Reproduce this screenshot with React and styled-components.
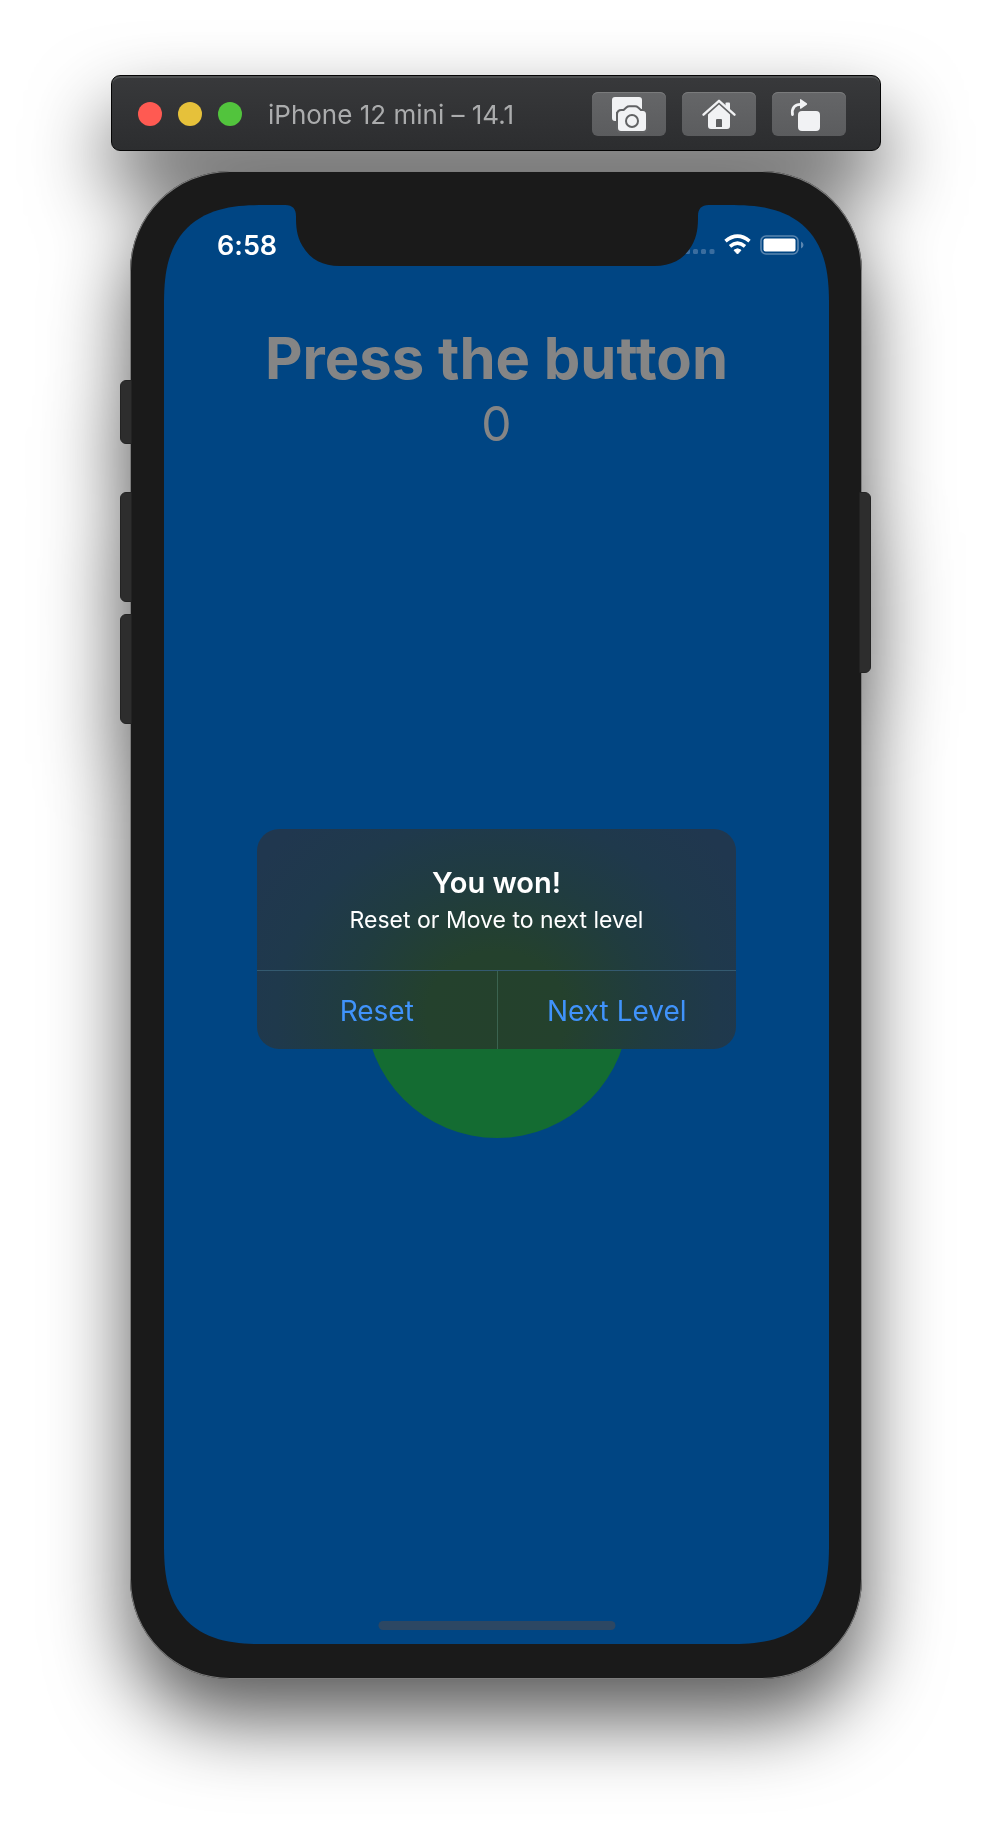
import React from "react";
import styled, { createGlobalStyle } from "styled-components";

const GlobalStyle = createGlobalStyle`
  *, *::before, *::after { box-sizing: border-box; }
  body {
    margin: 0;
    background: #fff;
    font-family: Inter, "Liberation Sans", sans-serif;
    font-variant-ligatures: none;
    font-feature-settings: "calt" 0;
  }
  h1, h2, p { margin: 0; }
  button { font: inherit; border: 0; padding: 0; cursor: pointer; }
`;

const Simulator = styled.main`
  display: flex;
  flex-direction: column;
  gap: 20px;
  padding: 75px 111px 148px;
  filter: drop-shadow(0 40px 40px rgba(0, 0, 0, 0.65));
`;

const Toolbar = styled.header`
  display: flex;
  align-items: center;
  height: 76px;
  padding: 2px 34px 0 26px;
  border: 1px solid #050505;
  border-radius: 9px;
  background: linear-gradient(#38393b, #2c2d2f);
  box-shadow: inset 0 2px 0 #505253;
`;

const TrafficLights = styled.div`
  display: flex;
  gap: 16px;
`;

const Light = styled.button`
  width: 24px;
  height: 24px;
  border-radius: 50%;
  background: ${(p) => p.$color};
`;

const DeviceTitle = styled.span`
  flex: 1;
  margin-left: 26px;
  padding-top: 2px;
  font-size: 26px;
  line-height: 32px;
  white-space: nowrap;
  color: #abacad;
`;

const Tools = styled.div`
  display: flex;
  gap: 16px;
`;

const ToolButton = styled.button`
  width: 74px;
  height: 44px;
  border-radius: 6px;
  background: linear-gradient(#656668, #5b5c5e);
  box-shadow: inset 0 1px 0 #7a7b7c;

  svg { display: block; }
`;

const Phone = styled.section`
  position: relative;
  margin: 0 19px;
  padding: 34px 33px 35px 34px;
  border-radius: 100px;
  background: #1a1a1a;
  box-shadow: inset 0 0 0 1px #7d7d7d;
`;

const SideButton = styled.span`
  position: absolute;
  top: ${(p) => p.$top}px;
  ${(p) => (p.$side === "left" ? "left: -10px" : "right: -9px")};
  width: 12px;
  height: ${(p) => p.$length}px;
  border: 1px solid #232323;
  border-radius: ${(p) => (p.$side === "left" ? "6px 0 0 6px" : "0 6px 6px 0")};
  background: #2d2d2d;
`;

const Screen = styled.div`
  position: relative;
  display: flex;
  flex-direction: column;
  aspect-ratio: 665 / 1439;
  overflow: hidden;
  border-radius: 82px;
  background: #004583;

  @supports (corner-shape: squircle) {
    border-radius: 100px;
    corner-shape: superellipse(1.4);
  }
`;

const Notch = styled.svg`
  position: absolute;
  top: 0;
  left: 50%;
  transform: translateX(-50%);
  width: 423px;
  height: 61px;
`;

const StatusBar = styled.div`
  display: flex;
  justify-content: space-between;
  align-items: center;
  height: 82px;
  padding: 0 25px 0 53px;
  color: #fff;
`;

const Clock = styled.time`
  font-size: 27px;
  font-weight: 600;
  line-height: 32px;
`;

const Game = styled.div`
  flex: 1;
  display: flex;
  flex-direction: column;
  align-items: center;
  padding: 36px 24px 88px;
  color: #858585;
`;

const Heading = styled.h1`
  font-size: 58px;
  font-weight: 700;
  line-height: 70px;
  white-space: nowrap;
`;

const Score = styled.p`
  font-size: 48px;
  font-weight: 400;
  line-height: 62px;
`;

const TapButton = styled.button`
  width: 264px;
  height: 264px;
  margin: auto;
  border-radius: 50%;
  background: #146c32;
`;

const HomeIndicator = styled.div`
  position: absolute;
  bottom: 14px;
  left: 50%;
  transform: translateX(-50%);
  width: 237px;
  height: 9px;
  border-radius: 5px;
  background: #2c4763;
`;

const Overlay = styled.div`
  position: absolute;
  inset: 0;
  display: grid;
  place-items: center;
  padding-top: 29px;
`;

const Alert = styled.div`
  width: 479px;
  max-width: 90%;
  overflow: hidden;
  border-radius: 22px;
  text-align: center;
  color: #fff;
  background: radial-gradient(
    ellipse 290px 260px at 50% 84%,
    #24412c 0%,
    #24412d 24%,
    #203c40 52%,
    #1f394c 76%,
    #20374f 100%
  );
`;

const AlertBody = styled.div`
  padding: 34px 20px 33px;
`;

const AlertTitle = styled.h2`
  font-size: 29px;
  font-weight: 600;
  line-height: 40px;
`;

const AlertText = styled.p`
  font-size: 23px;
  line-height: 34px;
`;

const AlertActions = styled.div`
  display: grid;
  grid-template-columns: 1fr 1fr;
  border-top: 1px solid #345a70;
`;

const AlertButton = styled.button`
  height: 78px;
  padding-top: 2px;
  background: transparent;
  color: #4093fb;
  font-size: 28px;

  & + & { border-left: 1px solid #3b6350; }
`;

const ScreenshotIcon = () => (
  <svg width="74" height="44" viewBox="0 0 74 44" aria-hidden="true">
    <path d="M23 5H47Q50 5 50 8V20H24V29H23Q20 29 20 26V8Q20 5 23 5Z" fill="#f1f2f4" />
    <path
      d="M26 22.500Q26 19 29.500 19H32L35 16.200Q36 15.300 37.500 15.300H43Q44.500 15.300 45.500 16.200L48.500 19H51Q54 19 54 22.500V36Q54 39 51 39H29Q26 39 26 36Z"
      fill="#f1f2f4"
      stroke="#616264"
      strokeWidth="4"
      paintOrder="stroke"
    />
    <circle cx="40" cy="29" r="6" fill="none" stroke="#616264" strokeWidth="2" />
  </svg>
);

const HomeIcon = () => (
  <svg width="74" height="44" viewBox="0 0 74 44" aria-hidden="true">
    <path d="M21.500 22.700 37 8.800 52.500 22.700" fill="none" stroke="#f1f2f4" strokeWidth="2.400" strokeLinecap="round" strokeLinejoin="round" />
    <path d="M43.500 11Q43.500 10.500 44.500 10.500H47Q48 10.500 48 11.500V19L43.500 15Z" fill="#f1f2f4" />
    <path
      fillRule="evenodd"
      d="M37 12.500 48 22.500V34Q48 37 45 37H29Q26 37 26 34V22.500ZM34 28V35H40V28Q40 27 39 27H35Q34 27 34 28Z"
      fill="#f1f2f4"
    />
  </svg>
);

const RotateIcon = () => (
  <svg width="74" height="44" viewBox="0 0 74 44" aria-hidden="true">
    <path d="M20.500 22.500C19.500 16 23 12.300 28.500 12.300" fill="none" stroke="#f1f2f4" strokeWidth="2.800" strokeLinecap="round" />
    <path d="M28 8Q28 6.500 29.300 7.400L34.800 11.200Q35.600 12 34.800 12.700L29.300 16.500Q28 17.400 28 16Z" fill="#f1f2f4" />
    <rect x="26" y="19" width="22" height="20" rx="4" fill="#f1f2f4" />
  </svg>
);

const StatusIcons = () => (
  <svg width="120" height="24" viewBox="0 0 120 24" aria-label="Wi-Fi connected, battery full" role="img">
    <g fill="#3a6d9f">
      <rect x="1" y="15" width="5" height="5" rx="1.500" />
      <rect x="9" y="15" width="5" height="5" rx="1.500" />
      <rect x="17" y="15" width="5" height="5" rx="1.500" />
      <rect x="25.500" y="15" width="5" height="5" rx="1.500" />
    </g>
    <g fill="none" stroke="#fff" strokeWidth="3.600">
      <path d="M41.500 7.200Q53.500-2.800 65.500 7.200" />
      <path d="M46 12.300Q53.500 6 61 12.300" />
    </g>
    <path d="M50 16.200Q53.500 13.400 57 16.200L53.500 20Z" fill="#fff" stroke="#fff" strokeLinejoin="round" />
    <rect x="77" y="2" width="37" height="18" rx="5" fill="none" stroke="#5a86b0" strokeWidth="1.600" />
    <rect x="79.500" y="4.500" width="32" height="13" rx="2" fill="#fff" />
    <path d="M117 7.500Q119.500 8.500 119.500 11T117 14.500Z" fill="#5a86b0" />
  </svg>
);

export default function App() {
  return (
    <>
      <GlobalStyle />
      <Simulator>
        <Toolbar>
          <TrafficLights>
            <Light $color="#ff5a52" aria-label="Close" />
            <Light $color="#e6c13a" aria-label="Minimize" />
            <Light $color="#52c43d" aria-label="Zoom" />
          </TrafficLights>
          <DeviceTitle>iPhone 12 mini – 14.1</DeviceTitle>
          <Tools>
            <ToolButton aria-label="Screenshot"><ScreenshotIcon /></ToolButton>
            <ToolButton aria-label="Home"><HomeIcon /></ToolButton>
            <ToolButton aria-label="Rotate"><RotateIcon /></ToolButton>
          </Tools>
        </Toolbar>

        <Phone>
          <SideButton $side="left" $top={209} $length={64} />
          <SideButton $side="left" $top={321} $length={110} />
          <SideButton $side="left" $top={443} $length={110} />
          <SideButton $side="right" $top={321} $length={181} />
          <Screen>
            <StatusBar>
              <Clock>6:58</Clock>
              <StatusIcons />
            </StatusBar>
            <Game>
              <Heading>Press the button</Heading>
              <Score>0</Score>
              <TapButton aria-label="Tap" />
            </Game>
            <HomeIndicator />
            <Notch viewBox="0 0 424 61" aria-hidden="true">
              <path
                d="M0 0C7 0 10.500 4 10.500 11C10.500 21 11 31 17 41C25 55 38 61 54 61H370C386 61 399 55 407 41C413 31 413.500 21 413.500 11C413.500 4 417 0 424 0Z"
                fill="#1a1a1a"
              />
            </Notch>
            <Overlay>
              <Alert role="alertdialog" aria-labelledby="alert-title" aria-describedby="alert-text">
                <AlertBody>
                  <AlertTitle id="alert-title">You won!</AlertTitle>
                  <AlertText id="alert-text">Reset or Move to next level</AlertText>
                </AlertBody>
                <AlertActions>
                  <AlertButton>Reset</AlertButton>
                  <AlertButton>Next Level</AlertButton>
                </AlertActions>
              </Alert>
            </Overlay>
          </Screen>
        </Phone>
      </Simulator>
    </>
  );
}
